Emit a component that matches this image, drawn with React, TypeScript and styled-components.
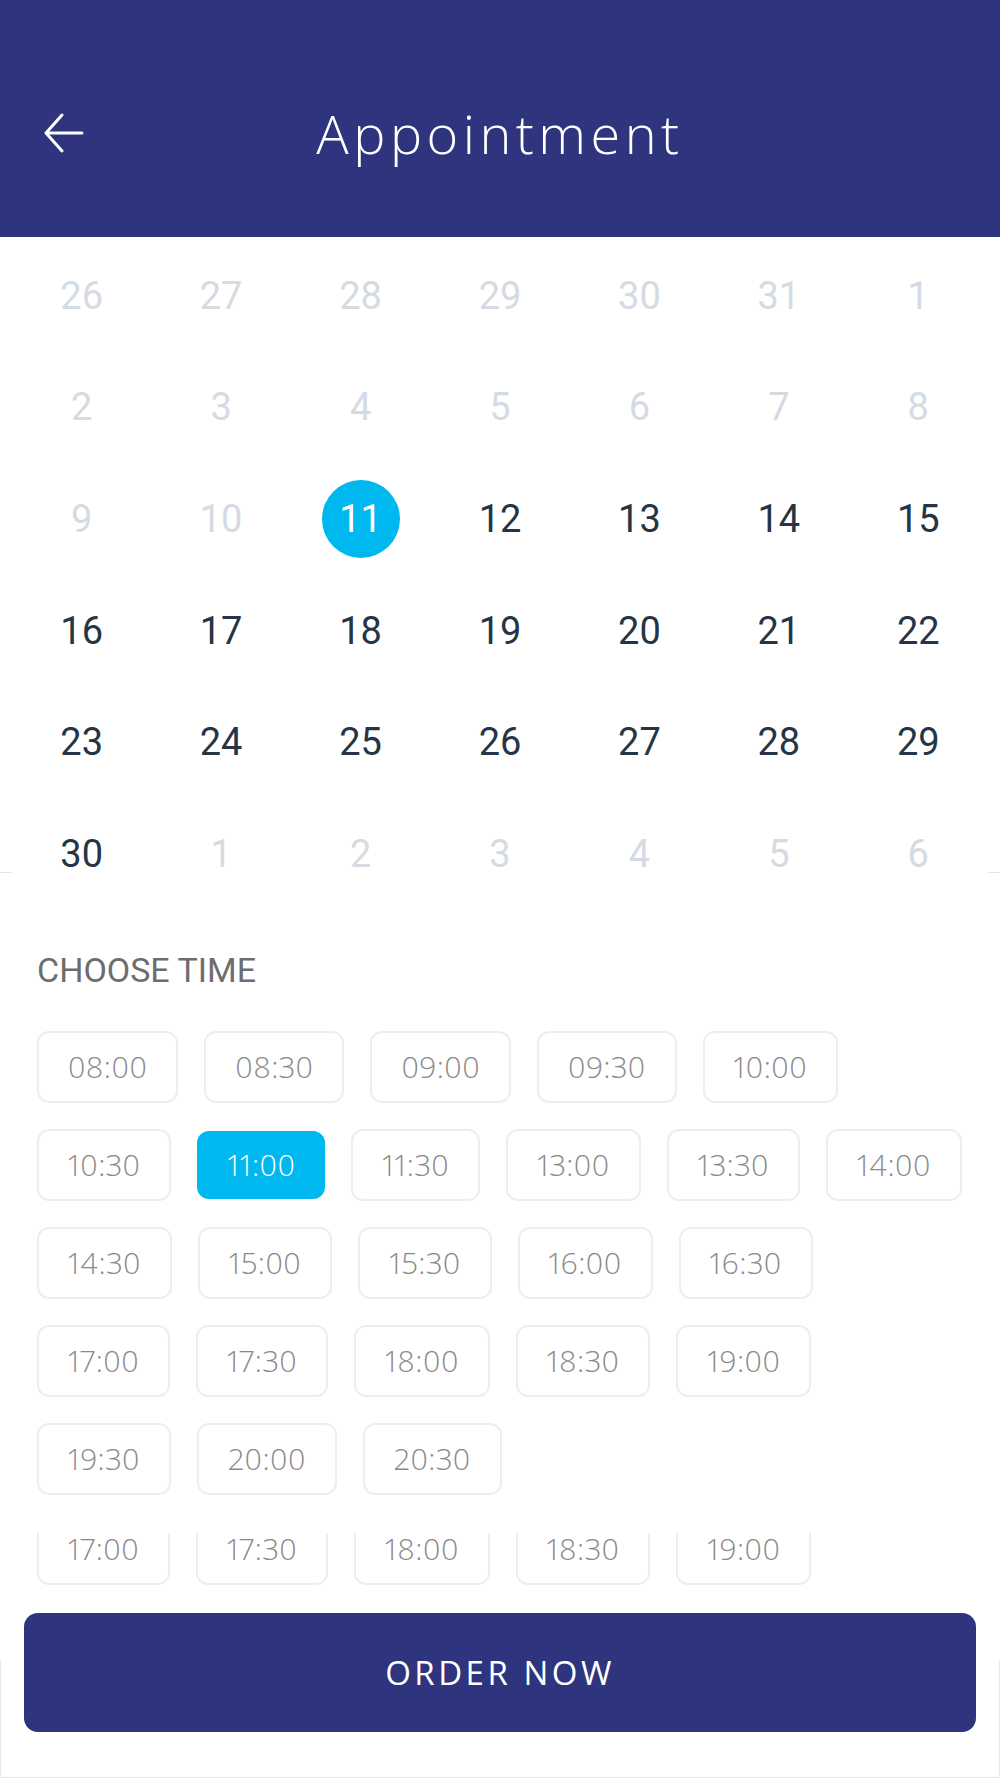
import React from "react";
import styled, { createGlobalStyle } from "styled-components";

const GlobalStyle = createGlobalStyle`
  html, body { margin: 0; padding: 0; background: #ffffff; }
  * { box-sizing: border-box; }
`;

const Page = styled.div`
  width: 1000px;
  height: 1778px;
  display: flex;
  flex-direction: column;
  background: #ffffff;
  overflow: hidden;
`;

const Header = styled.header`
  height: 237px;
  flex-shrink: 0;
  background: #2e357e;
  display: grid;
  grid-template-columns: 1fr auto 1fr;
  align-items: center;
  padding-top: 28px;
`;

const BackButton = styled.button`
  justify-self: start;
  margin-left: 42px;
  width: 44px;
  height: 44px;
  padding: 0;
  border: none;
  background: transparent;
  display: flex;
  align-items: center;
  justify-content: center;
  cursor: pointer;
`;

const Title = styled.h1`
  margin: 0;
  font-family: "Open Sans", "Liberation Sans", sans-serif;
  font-weight: 300;
  font-size: 54px;
  letter-spacing: 4.5px;
  color: #ffffff;
  line-height: 1;
`;

const CalendarWrap = styled.section`
  padding: 3px 12px 0;
  flex-shrink: 0;
  background: linear-gradient(#dfe4ea, #dfe4ea) no-repeat 0 635px / 100% 1px;
`;

const DayGrid = styled.div`
  display: grid;
  grid-template-columns: repeat(7, 1fr);
  grid-auto-rows: 111.6px;
  background: #ffffff;
`;

const DayCell = styled.div`
  display: flex;
  align-items: center;
  justify-content: center;
`;

const DayNumber = styled.span<{ $muted?: boolean; $selected?: boolean }>`
  font-family: Roboto, "Liberation Sans", sans-serif;
  font-size: 38px;
  line-height: 1;
  width: 78px;
  height: 78px;
  border-radius: 50%;
  display: flex;
  align-items: center;
  justify-content: center;
  color: ${(p) => (p.$selected ? "#ffffff" : p.$muted ? "#d4dbe3" : "#263545")};
  background: ${(p) => (p.$selected ? "#00b8f0" : "transparent")};
`;

const TimeSection = styled.section`
  padding: 43px 37px 0;
  display: flex;
  flex-direction: column;
`;

const SectionLabel = styled.h2`
  margin: 0 0 43px;
  font-family: Roboto, "Liberation Sans", sans-serif;
  font-weight: 400;
  font-size: 34px;
  line-height: 35px;
  color: #6d6d6d;
`;

const SlotRows = styled.div`
  display: flex;
  flex-direction: column;
  gap: 26px;
`;

const SlotRow = styled.div`
  display: flex;
  align-items: center;
  gap: 26px;
  height: 72px;
`;

const ClippedRow = styled(SlotRow)`
  height: 52px;
  margin-top: 38px;
  overflow: hidden;
  align-items: flex-end;
`;

const Slot = styled.button<{ $active?: boolean }>`
  height: ${(p) => (p.$active ? 68 : 72)}px;
  padding: 0 ${(p) => (p.$active ? 28 : 29)}px;
  flex-shrink: 0;
  border-radius: 12px;
  border: 2px solid ${(p) => (p.$active ? "#00b8f0" : "#eeeeee")};
  background: ${(p) => (p.$active ? "#00b8f0" : "#ffffff")};
  color: ${(p) => (p.$active ? "#ffffff" : "#8a8a8a")};
  font-family: "Open Sans", "Liberation Sans", sans-serif;
  font-weight: 300;
  font-size: 30px;
  font-variant-numeric: proportional-nums;
  letter-spacing: 0.5px;
  display: flex;
  align-items: center;
  justify-content: center;
  cursor: pointer;
`;

const Footer = styled.footer`
  flex: 1;
  display: flex;
  flex-direction: column;
  padding-top: 28px;
`;

const OrderButton = styled.button`
  margin: 0 24px -72px;
  height: 119px;
  flex-shrink: 0;
  border: none;
  border-radius: 14px;
  background: #2e357e;
  color: #ffffff;
  font-family: "Open Sans", "Liberation Sans", sans-serif;
  font-weight: 400;
  font-size: 33px;
  letter-spacing: 3.5px;
  cursor: pointer;
`;

const BottomBar = styled.div`
  flex: 1;
  border: 1px solid #e8e8e8;
  border-top: none;
`;

type Day = { n: number; muted?: boolean; selected?: boolean };

const weeks: Day[][] = [
  [26, 27, 28, 29, 30, 31, 1].map((n) => ({ n, muted: true })),
  [2, 3, 4, 5, 6, 7, 8].map((n) => ({ n, muted: true })),
  [
    { n: 9, muted: true },
    { n: 10, muted: true },
    { n: 11, selected: true },
    { n: 12 },
    { n: 13 },
    { n: 14 },
    { n: 15 },
  ],
  [16, 17, 18, 19, 20, 21, 22].map((n) => ({ n })),
  [23, 24, 25, 26, 27, 28, 29].map((n) => ({ n })),
  [{ n: 30 }, ...[1, 2, 3, 4, 5, 6].map((n) => ({ n, muted: true }))],
];

const slotRows: string[][] = [
  ["08:00", "08:30", "09:00", "09:30", "10:00"],
  ["10:30", "11:00", "11:30", "13:00", "13:30", "14:00"],
  ["14:30", "15:00", "15:30", "16:00", "16:30"],
  ["17:00", "17:30", "18:00", "18:30", "19:00"],
  ["19:30", "20:00", "20:30"],
];

const extraRow = ["17:00", "17:30", "18:00", "18:30", "19:00"];

const BackArrow = () => (
  <svg width="40" height="40" viewBox="0 0 40 40" fill="none">
    <path
      d="M38 20H2M18 2L2 20L18 38"
      stroke="#ffffff"
      strokeWidth="3"
      strokeLinecap="round"
      strokeLinejoin="round"
    />
  </svg>
);

export default function App() {
  const selectedTime = "11:00";
  return (
    <>
      <GlobalStyle />
      <Page>
        <Header>
          <BackButton aria-label="Back">
            <BackArrow />
          </BackButton>
          <Title>Appointment</Title>
          <span />
        </Header>

        <CalendarWrap>
          <DayGrid>
            {weeks.flat().map((d, i) => (
              <DayCell key={i}>
                <DayNumber $muted={d.muted} $selected={d.selected}>
                  {d.n}
                </DayNumber>
              </DayCell>
            ))}
          </DayGrid>
        </CalendarWrap>

        <TimeSection>
          <SectionLabel>CHOOSE TIME</SectionLabel>
          <SlotRows>
            {slotRows.map((row, ri) => (
              <SlotRow key={ri}>
                {row.map((t) => (
                  <Slot key={t} $active={t === selectedTime}>
                    {t}
                  </Slot>
                ))}
              </SlotRow>
            ))}
          </SlotRows>
          <ClippedRow>
            {extraRow.map((t) => (
              <Slot key={t}>{t}</Slot>
            ))}
          </ClippedRow>
        </TimeSection>

        <Footer>
          <OrderButton>ORDER NOW</OrderButton>
          <BottomBar />
        </Footer>
      </Page>
    </>
  );
}
